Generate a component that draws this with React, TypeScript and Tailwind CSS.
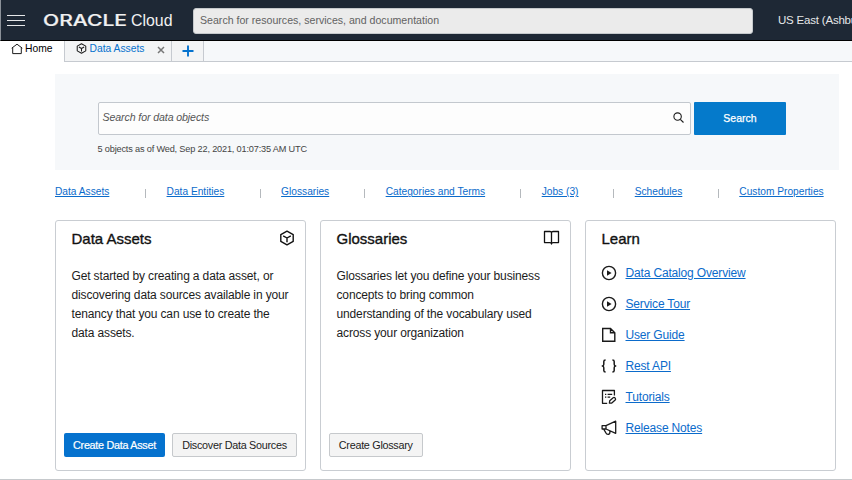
import React from "react";

const svgBase = {
  fill: "none",
  stroke: "currentColor",
  strokeLinejoin: "round" as const,
};

function Cube({ size, w }: { size: number; w: number }) {
  return (
    <svg width={size} height={size} viewBox="0 0 16 16" strokeWidth={w} {...svgBase}>
      <path d="M8 1.2 14.2 4.6V11.4L8 14.8 1.8 11.4V4.6Z M4.2 5.8 8 8l3.8-2.2M8 8v4.2" />
    </svg>
  );
}

function Book() {
  return (
    <svg width="17" height="16" viewBox="0 0 17 16" strokeWidth="1.3" {...svgBase}>
      <path d="M1.5 1.5H7Q8.5 1.5 8.5 2.6Q8.5 1.5 10 1.5H15.5V12.6H10Q8.5 12.6 8.5 14Q8.5 12.6 7 12.6H1.5Z M8.5 2.5V13.6" />
    </svg>
  );
}

function Play() {
  return (
    <svg width="16" height="16" viewBox="0 0 16 16" strokeWidth="1.4" {...svgBase}>
      <circle cx="8" cy="8" r="6.6" />
      <path d="M6 5.3 10.6 8 6 10.7Z" fill="currentColor" stroke="none" />
    </svg>
  );
}

function Doc() {
  return (
    <svg width="16" height="16" viewBox="0 0 16 16" strokeWidth="1.4" strokeLinejoin="miter" fill="none" stroke="currentColor">
      <path d="M1.7 1.5H9.5L13.8 5.8V14.3H1.7Z M9.5 1.5V5.8H13.8" />
    </svg>
  );
}

function Braces() {
  return (
    <svg width="16" height="16" viewBox="0 0 16 16" strokeWidth="1.5" {...svgBase}>
      <path d="M4.6 1.9Q2.8 1.9 2.8 3.4V6.3Q2.8 7.9 1.3 8Q2.8 8.1 2.8 9.7V12.6Q2.8 14.1 4.6 14.1M11.4 1.9Q13.2 1.9 13.2 3.4V6.3Q13.2 7.9 14.7 8Q13.2 8.1 13.2 9.7V12.6Q13.2 14.1 11.4 14.1" />
    </svg>
  );
}

function Tutorial() {
  return (
    <svg width="16" height="16" viewBox="0 0 16 16" strokeWidth="1.3" {...svgBase}>
      <path d="M6.2 14.3H1.5V1.5H13.4V6.5M4 5.3h1.3M6.6 5.3h4.6M4 8.2h1.3M6.6 8.2h2.6" />
      <path d="M8.4 14.2 8.7 11.8 12.2 8.7Q13.2 8 14.2 9.1Q15 10.2 14.2 11L10.8 14Z" />
    </svg>
  );
}

function Megaphone() {
  return (
    <svg width="16" height="16" viewBox="0 0 16 16" strokeWidth="1.3" {...svgBase}>
      <path d="M14.7 1.2V13.3L5 9H1.1V5.6H5Z M5 5.6V9M2.6 9 4.6 12.4Q5.6 14.6 7.6 14.3Q9.2 13.8 8.9 11" />
    </svg>
  );
}

const shortcuts = [
  { label: "Data Assets", w: "w-[55px]" },
  { label: "Data Entities", w: "w-[58px]" },
  { label: "Glossaries", w: "w-[48px]" },
  { label: "Categories and Terms", w: "w-[99.5px]" },
  { label: "Jobs (3)", w: "w-[36.5px]" },
  { label: "Schedules", w: "w-[48px]" },
  { label: "Custom Properties", w: "w-[86px]" },
];

const learn = [
  { label: "Data Catalog Overview", icon: <Play /> },
  { label: "Service Tour", icon: <Play /> },
  { label: "User Guide", icon: <Doc /> },
  { label: "Rest API", icon: <Braces /> },
  { label: "Tutorials", icon: <Tutorial /> },
  { label: "Release Notes", icon: <Megaphone /> },
];

function Card({ title, icon, children }: { title: string; icon?: React.ReactNode; children: React.ReactNode }) {
  return (
    <section className="flex h-[251px] w-[251px] shrink-0 flex-col rounded-[3px] border border-[#c9cdd2] bg-white px-4">
      <div className="mt-[8px] flex h-5 items-center justify-between">
        <h2 className="text-[15px] leading-5 text-[#111] [-webkit-text-stroke:0.35px_#111]">{title}</h2>
        <span className="-mr-[6px] -mt-[3px] text-[#111]">{icon}</span>
      </div>
      {children}
    </section>
  );
}

export default function App() {
  return (
    <div className="flex h-[480px] w-[852px] flex-col overflow-hidden whitespace-nowrap border-b border-[#c6c9cc] bg-white font-['Liberation_Sans',Arial,sans-serif] text-[#1c1c1c]">
      <header className="flex h-[41px] shrink-0 items-center border-b border-l border-b-black border-l-[#8b9199] bg-[#1e2835]">
        <div className="ml-[6px] flex w-[18px] shrink-0 flex-col gap-[4px]">
          <i className="h-px bg-[#e6e7e9]" />
          <i className="h-px bg-[#e6e7e9]" />
          <i className="h-px bg-[#e6e7e9]" />
        </div>
        <svg className="ml-[17px] shrink-0" width="134" height="24" viewBox="0 0 134 24" fill="#f1f1f1">
          <text x="1" y="17.8" fontFamily="Inter, sans-serif" fontWeight="500" fontSize="15.5" textLength="84" lengthAdjust="spacingAndGlyphs" stroke="#f1f1f1" strokeWidth="0.2">ORACLE</text>
          <text x="89" y="17.8" fontFamily="Liberation Sans, sans-serif" fontSize="17" textLength="41.5" lengthAdjust="spacingAndGlyphs">Cloud</text>
        </svg>
        <div className="ml-[17px] mt-px flex h-[26px] w-[560px] shrink-0 items-center rounded-[3px] border border-[#c5c9cc] bg-[#ebebeb] pl-[6px] text-[10.6px] text-[#626262]">
          Search for resources, services, and documentation
        </div>
        <span className="ml-[25px] mt-[2px] w-[74px] shrink-0 text-[11.5px] tracking-[-0.2px] text-[#e6e7e9]">US East (Ashbu</span>
      </header>

      <nav className="flex h-[21px] shrink-0 bg-[#f6f8fa] text-[10.3px]">
        <div className="flex w-[64px] items-center bg-white pb-[5px] pl-[11px]">
          <svg width="12" height="12" viewBox="0 0 12 12" strokeWidth="1" {...svgBase}>
            <path d="M.7 5.2 6 1.2l5.3 4M1.7 4.6V10.6H10.3V4.6" />
          </svg>
          <span className="ml-[2px] text-black">Home</span>
        </div>
        <div className="flex w-[108px] items-center border-x border-b border-[#c6cad0] bg-[#f3f4f5] pb-[5px] pl-[11px]">
          <Cube size={11} w={1.5} />
          <span className="ml-[2.5px] w-[67px] text-[#0572ce]">Data Assets</span>
          <svg className="mt-[3px] text-[#777]" width="8" height="8" viewBox="0 0 8 8" strokeWidth="1.5" {...svgBase}>
            <path d="m1 1 6 6M7 1 1 7" />
          </svg>
        </div>
        <div className="flex w-[32px] items-center justify-center border-b border-r border-[#c6cad0] bg-[#f3f4f5] pb-px text-[#0572ce]">
          <svg width="12" height="12" viewBox="0 0 12 12" strokeWidth="1.9" {...svgBase}>
            <path d="M6 .5v11M.5 6h11" />
          </svg>
        </div>
        <div className="flex-1 border-b border-[#c6cad0]" />
      </nav>

      <main className="flex flex-col pl-[54px]">
        <section className="ml-px mt-3 flex h-[96px] w-[784px] flex-col bg-[#f6f8fa] pl-[42.5px] pt-[27.5px]">
          <div className="flex items-center gap-[3.5px]">
            <div className="flex h-[33px] w-[593px] items-center justify-between rounded-[2px] border border-[#c3c8ce] bg-[#fdfdfd] pb-[2px] pl-[4px] pr-[6px]">
              <span className="mt-px text-[10.6px] italic tracking-[-0.1px] text-[#555]">Search for data objects</span>
              <svg width="11" height="11" viewBox="0 0 11 11" strokeWidth="1.1" {...svgBase}>
                <circle cx="4.6" cy="4.6" r="3.7" />
                <path d="m7.3 7.3 3.2 3.2" />
              </svg>
            </div>
            <button className="h-[33px] w-[92px] shrink-0 rounded-[1px] bg-[#057acb] pt-px text-[10.5px] text-white [-webkit-text-stroke:0.25px_white]">Search</button>
          </div>
          <p className="mt-[7px] text-[9.2px] leading-[14px] tracking-[-0.18px] text-[#444]">5 objects as of Wed, Sep 22, 2021, 01:07:35 AM UTC</p>
        </section>

        <nav className="mt-[14px] flex h-4 items-center pl-px text-[10.2px] text-[#0b6bcb]">
          {shortcuts.map((s, i) => (
            <React.Fragment key={s.label}>
              {i > 0 && <i className="ml-[35px] mr-[20.55px] mt-[2px] h-[9px] w-px shrink-0 bg-[#b5b9bd]" />}
              <a className={"shrink-0 underline " + s.w}>{s.label}</a>
            </React.Fragment>
          ))}
        </nav>

        <div className="mt-5 flex gap-[14px] pl-[0.5px]">
          <Card title="Data Assets" icon={<Cube size={16} w={1.4} />}>
            <p className="mt-[18px] flex-1 text-[12px] leading-[19px] tracking-[-0.14px]">
              Get started by creating a data asset, or<br />discovering data sources available in your<br />tenancy that you can use to create the<br />data assets.
            </p>
            <div className="-ml-[7.5px] mb-[13px] flex gap-[7px] text-[10.8px]">
              <button className="h-6 w-[101px] shrink-0 rounded-[2px] bg-[#0572ce] tracking-[-0.28px] text-white [-webkit-text-stroke:0.2px_white]">Create Data Asset</button>
              <button className="h-6 w-[125px] shrink-0 rounded-[2px] border border-[#c6c9cc] bg-[#f4f4f4] tracking-[-0.28px]">Discover Data Sources</button>
            </div>
          </Card>
          <Card title="Glossaries" icon={<Book />}>
            <p className="mt-[18px] flex-1 text-[12px] leading-[19px] tracking-[-0.14px]">
              Glossaries let you define your business<br />concepts to bring common<br />understanding of the vocabulary used<br />across your organization
            </p>
            <div className="-ml-[7.5px] mb-[13px] flex text-[10.8px]">
              <button className="h-6 w-[93.5px] shrink-0 rounded-[2px] border border-[#c6c9cc] bg-[#f4f4f4] tracking-[-0.28px]">Create Glossary</button>
            </div>
          </Card>
          <Card title="Learn">
            <ul className="-ml-px mt-[8px] text-[12px] tracking-[-0.16px]">
              {learn.map((l) => (
                <li key={l.label} className="flex h-[31px] items-center gap-[9px]">
                  <span className="text-[#1a1a1a]">{l.icon}</span>
                  <a className="text-[#0b6bcb] underline">{l.label}</a>
                </li>
              ))}
            </ul>
          </Card>
        </div>
      </main>
    </div>
  );
}
